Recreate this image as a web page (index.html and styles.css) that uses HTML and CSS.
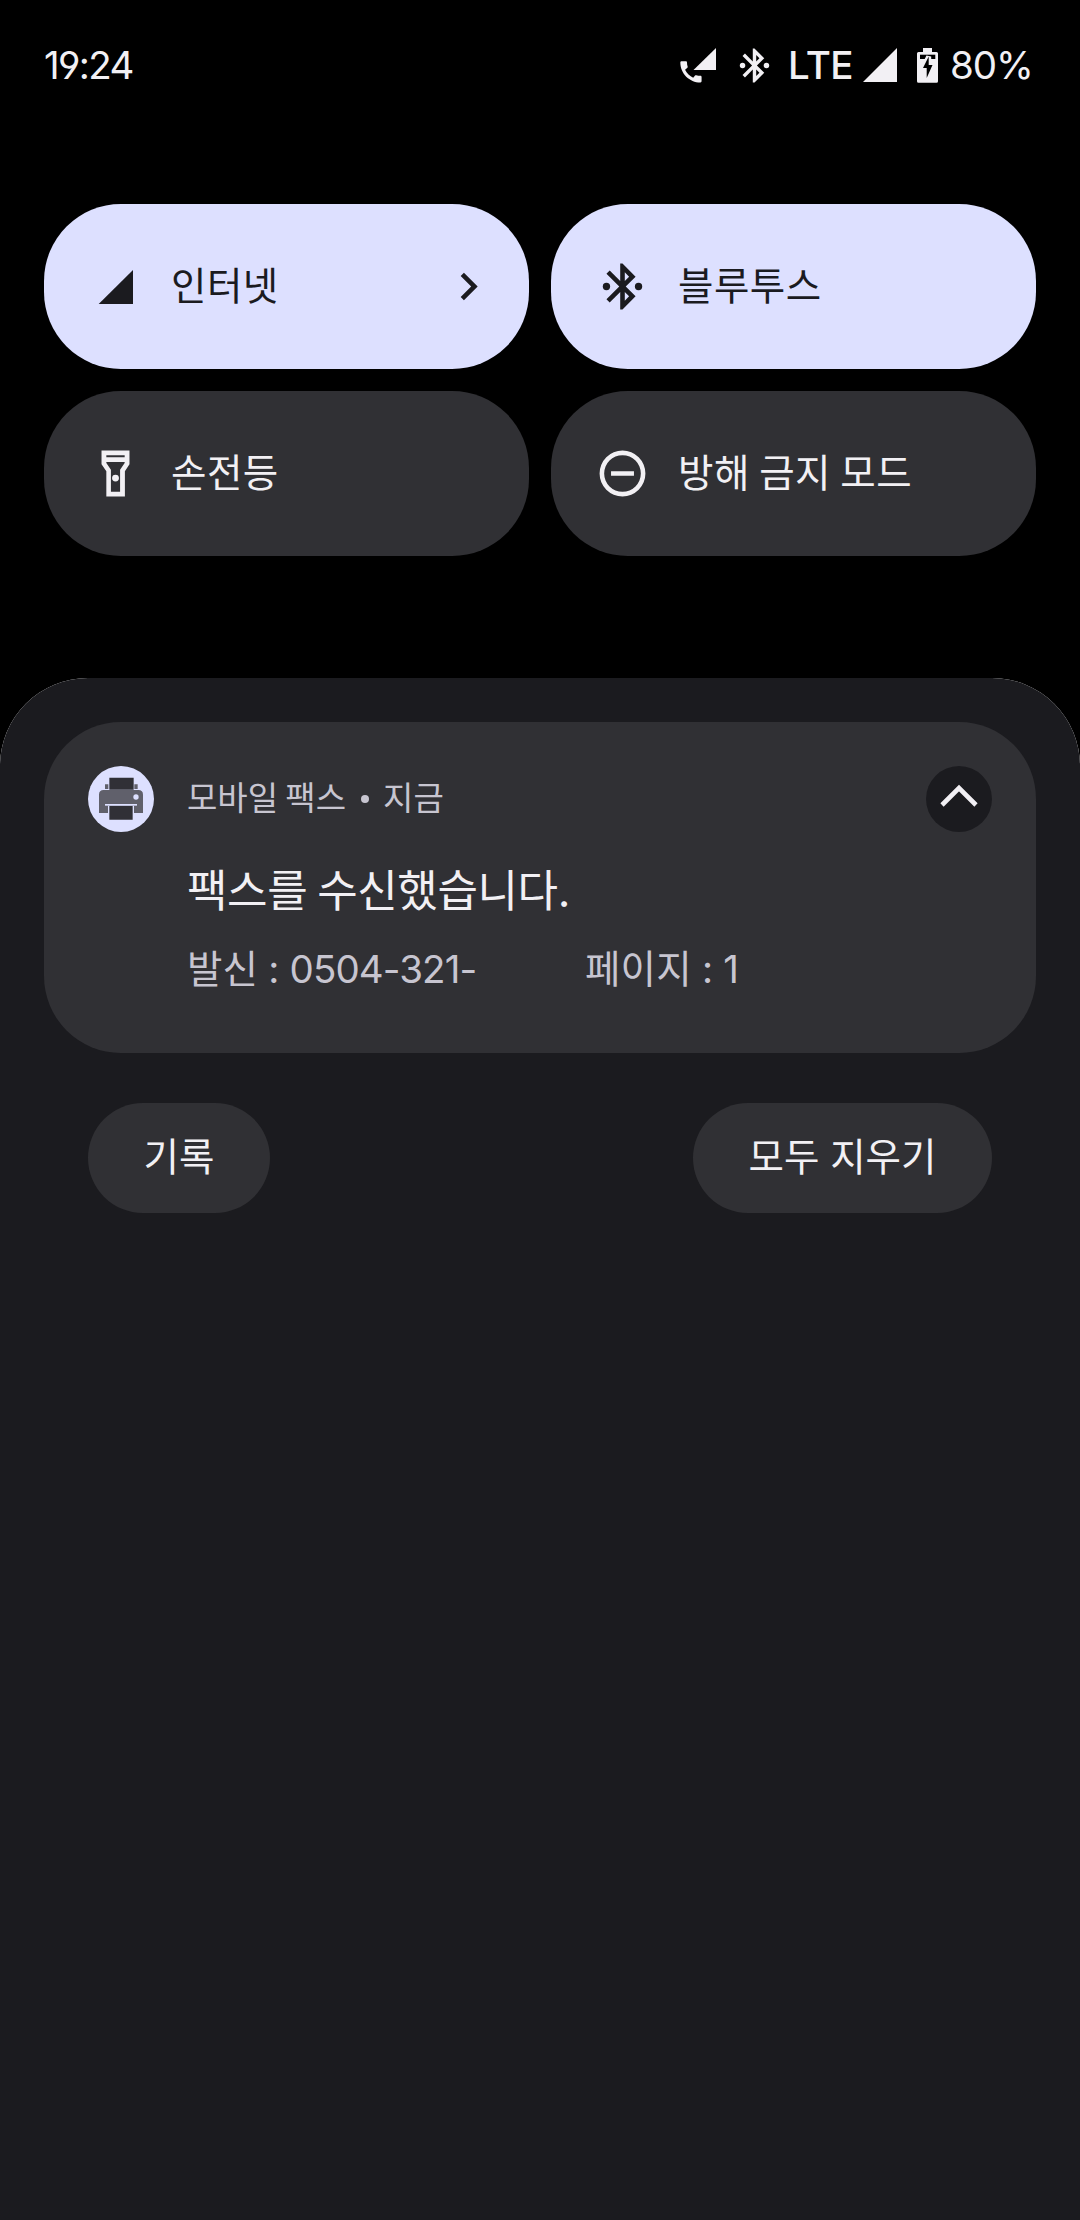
FILE: index.html
```html
<!DOCTYPE html>
<html lang="ko">
<head>
<meta charset="utf-8">
<title>알림</title>
<link rel="stylesheet" href="styles.css">
</head>
<body>
<svg width="0" height="0" class="defs">
  <symbol id="bluetooth" viewBox="0 0 24 24">
    <path d="M17.71 7.71L12 2h-1v7.59L6.41 5 5 6.41 10.59 12 5 17.59 6.41 19 11 14.41V22h1l5.71-5.71-4.3-4.29zM13 5.83l1.88 1.88L13 9.59zM14.88 16.29L13 18.17v-3.76z"/>
    <circle cx="5" cy="12" r="1.6"/><circle cx="19" cy="12" r="1.6"/>
  </symbol>
</svg>
<header class="status">
  <span class="clock">19:24</span>
  <div class="status-icons">
    <svg class="call" viewBox="0 0 36 35"><path d="M36 0v22H13.500z"/><path transform="translate(-3.200 9.700) scale(1.180)" d="M20.010 15.380c-1.230 0-2.420-.2-3.530-.56-.35-.12-.74-.03-1.010.24l-1.570 1.970c-2.830-1.350-5.480-3.900-6.890-6.830l1.950-1.660c.27-.28.35-.67.24-1.020-.37-1.110-.56-2.300-.56-3.530 0-.54-.45-.99-.99-.99H4.190C3.650 3 3 3.240 3 3.990 3 13.280 10.730 21 20.010 21c.71 0 .99-.63.99-1.180v-3.450c0-.54-.45-.99-.99-.99z"/></svg>
    <svg class="bt"><use href="#bluetooth"/></svg>
    <span class="lte">LTE</span>
    <svg class="signal" viewBox="0 0 34 34"><path d="M34 0v34H0z"/></svg>
    <svg class="battery" viewBox="0 0 21 35">
      <path d="M6 0h9v4h4.500Q21 4 21 5.500v27.700q0 1.500-1.500 1.500h-18Q0 34.700 0 33.200V5.500Q0 4 1.500 4H6z"/>
      <path class="hole" d="M3 6.700h15.300V11H3z"/>
      <path class="bolt" d="M11.700 8.500L6 20h3.700v10l5.800-13h-3.800z"/>
      <path class="hole" d="M11.700 8.500L6 20h3.700v10l5.800-13h-3.800z"/>
    </svg>
    <span class="percent">80%</span>
  </div>
</header>

<section class="tiles">
  <div class="tile on">
    <svg class="icon" viewBox="0 0 55 55"><path d="M45 11v34H10.700z"/></svg>
    <span class="label">인터넷</span>
    <svg class="icon chevron" viewBox="0 0 24 24"><path d="M10 6L8.590 7.410 13.170 12l-4.580 4.590L10 18l6-6z"/></svg>
  </div>
  <div class="tile on">
    <svg class="icon"><use href="#bluetooth"/></svg>
    <span class="label">블루투스</span>
  </div>
  <div class="tile">
    <svg class="icon" viewBox="0 0 24 24"><path fill-rule="evenodd" d="M5.900 2h12.200v6l-2 3v11H8V11L5.900 8zM8 4v.9h8V4zM8 7v.4l2 3V20h4v-9.600l2-3V7z"/><circle cx="12" cy="14" r="1.500"/></svg>
    <span class="label">손전등</span>
  </div>
  <div class="tile">
    <svg class="icon" viewBox="0 0 24 24"><path fill-rule="evenodd" d="M12 2a10 10 0 1 0 0 20 10 10 0 0 0 0-20zm0 2a8 8 0 1 1 0 16 8 8 0 0 1 0-16zM7 11h10v2H7z"/></svg>
    <span class="label">방해 금지 모드</span>
  </div>
</section>

<main class="shade">
  <div class="shade-body">
    <article class="card">
      <svg class="app" viewBox="0 0 198 198">
        <circle class="disc" cx="99" cy="99" r="99"/>
        <path class="gray" d="M33 141V86q0-14 14-14h104q14 0 14 14v55h-27v-22H60v22zM51 55h10v14H51zM139 55h10v14h-10z"/>
        <path class="disc" d="M51 114h96v5H51z"/>
        <circle class="disc" cx="144" cy="93" r="8"/>
        <path class="paper" d="M64 35h73v36H64zM64 120h70v41H64z"/>
      </svg>
      <div class="content">
        <div class="meta"><span>모바일 팩스</span><span class="dot"></span><span>지금</span></div>
        <h1 class="title">팩스를 수신했습니다.</h1>
        <p class="text"><span class="from">발신 : <span class="number">0504-321-</span></span><span>페이지 : 1</span></p>
      </div>
      <div class="collapse"><svg viewBox="0 0 66 66"><path d="M16 39l17-17 17 17"/></svg></div>
    </article>
    <div class="actions">
      <div class="button history">기록</div>
      <div class="button clear">모두 지우기</div>
    </div>
  </div>
</main>
</body>
</html>
```
FILE: styles.css
```css
* { box-sizing: border-box; margin: 0; }
body {
  width: 1080px; height: 2220px;
  display: flex; flex-direction: column;
  background: #000; color: #f2f0f4; overflow: hidden;
  font-family: Inter, "Noto Sans CJK KR", sans-serif;
  font-size: 38.5px; line-height: 54px;
  font-feature-settings: "cv04";
}
svg { display: block; flex: none; fill: currentColor; }
.defs { position: absolute; }

.status { height: 132px; padding: 0 50px 2px 44px; display: flex; justify-content: space-between; align-items: center; white-space: nowrap; }
.clock { letter-spacing: -1.6px; }
.status-icons { display: flex; align-items: center; }
.call { width: 36px; height: 35px; margin-right: 18px; }
.bt { width: 41px; height: 41px; margin-right: 13px; }
.lte { width: 75px; font-weight: 500; letter-spacing: -0.5px; }
.signal { width: 34px; height: 34px; margin-right: 20px; }
.battery { width: 21px; height: 35px; margin-right: 12px; }
.hole { fill: #000; }
.bolt { stroke: #f2f0f4; stroke-width: 5; }
.percent { width: 80px; letter-spacing: -1px; }

.tiles { margin: 72px 44px 122px; display: grid; grid-template-columns: 1fr 1fr; gap: 22px; }
.tile { height: 165px; border-radius: 77px; padding: 0 33px 0 44px; display: flex; align-items: center; gap: 28px; background: #303034; white-space: nowrap; }
.tile.on { background: #dde0ff; color: #1b1b1f; }
.icon { width: 55px; height: 55px; }
.label { letter-spacing: 0.5px; word-spacing: -2px; padding-bottom: 1px; }
.chevron { margin-left: auto; }

/* The light layer under the rounded sheet leaves a hairline on its corners. */
.shade { flex: 1; display: flex; border-radius: 88px 88px 0 0; background: #fff; }
.shade-body { flex: 1; border-radius: 88px 88px 0 0; background: #1b1b1f; padding: 44px; }
.card { height: 331px; border-radius: 77px; background: #303034; padding: 44px; display: flex; align-items: flex-start; }
.app { width: 66px; height: 66px; margin-right: 33px; }
.disc { fill: #dde0ff; }
.gray { fill: #60606b; }
.paper { fill: #303036; }
.content { flex: 1; white-space: nowrap; }
.meta { height: 66px; display: flex; align-items: center; font-size: 33px; color: #c7c5d0; word-spacing: -2px; padding-bottom: 2px; }
.dot { width: 8px; height: 8px; border-radius: 50%; background: currentColor; margin: 2px 14.5px 0; }
.title { font-size: 44px; font-weight: 400; line-height: 60px; margin-top: 29px; letter-spacing: -0.4px; word-spacing: -2px; }
.text { display: flex; color: #c7c5d0; margin-top: 21px; word-spacing: -1px; letter-spacing: 0.2px; }
.from { width: 398px; }
.number { letter-spacing: -0.9px; }
.collapse { width: 66px; height: 66px; border-radius: 50%; background: #1b1b1f; }
.collapse path { fill: none; stroke: #f2f0f4; stroke-width: 4.6; }
.actions { margin: 50px 44px 0; display: flex; justify-content: space-between; }
.button { height: 110px; border-radius: 55px; background: #303034; line-height: 109px; text-align: center; white-space: nowrap; }
.history { width: 182px; }
.clear { width: 299px; }
```
